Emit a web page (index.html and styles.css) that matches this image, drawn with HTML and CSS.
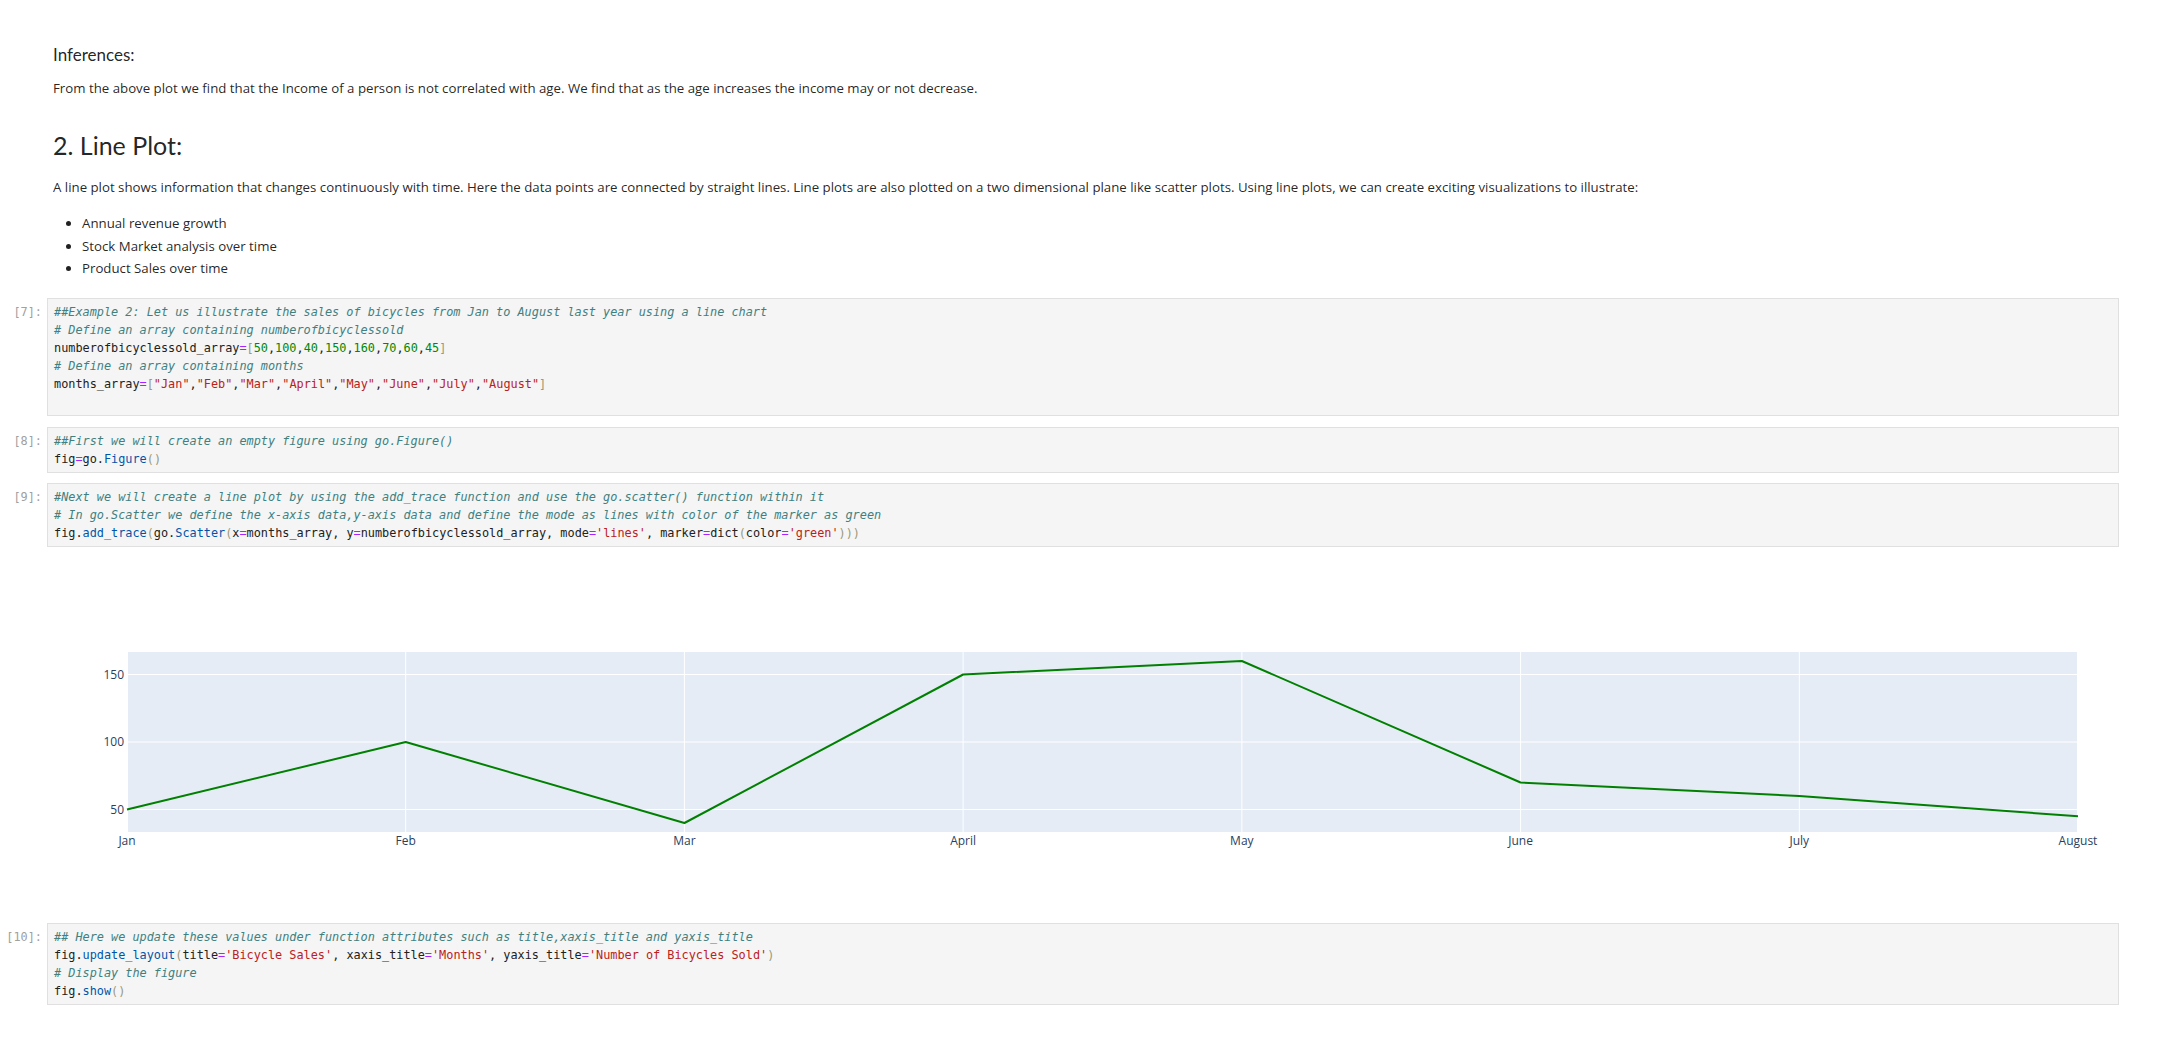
FILE: index.html
```html
<!DOCTYPE html>
<html>
<head>
<meta charset="utf-8">
<link rel="stylesheet" href="styles.css">
</head>
<body>
<div class="page">
  <div class="md">
    <h4 class="h-inf">Inferences:</h4>
    <p class="p1">From the above plot we find that the Income of a person is not correlated with age. We find that as the age increases the income may or not decrease.</p>
    <h2 class="h-line">2. Line Plot:</h2>
    <p class="p2">A line plot shows information that changes continuously with time. Here the data points are connected by straight lines. Line plots are also plotted on a two dimensional plane like scatter plots. Using line plots, we can create exciting visualizations to illustrate:</p>
    <ul class="list">
      <li>Annual revenue growth</li>
      <li>Stock Market analysis over time</li>
      <li>Product Sales over time</li>
    </ul>
  </div>

  <div class="cell c7">
    <div class="prompt">[7]:</div>
    <pre class="code"><span class="cm">##Example 2: Let us illustrate the sales of bicycles from Jan to August last year using a line chart</span>
<span class="cm"># Define an array containing numberofbicyclessold</span>
numberofbicyclessold_array<span class="op">=</span><span class="br">[</span><span class="nu">50</span>,<span class="nu">100</span>,<span class="nu">40</span>,<span class="nu">150</span>,<span class="nu">160</span>,<span class="nu">70</span>,<span class="nu">60</span>,<span class="nu">45</span><span class="br">]</span>
<span class="cm"># Define an array containing months</span>
months_array<span class="op">=</span><span class="br">[</span><span class="st">"Jan"</span>,<span class="st">"Feb"</span>,<span class="st">"Mar"</span>,<span class="st">"April"</span>,<span class="st">"May"</span>,<span class="st">"June"</span>,<span class="st">"July"</span>,<span class="st">"August"</span><span class="br">]</span>
&nbsp;</pre>
  </div>

  <div class="cell c8">
    <div class="prompt">[8]:</div>
    <pre class="code"><span class="cm">##First we will create an empty figure using go.Figure()</span>
fig<span class="op">=</span>go.<span class="pr">Figure</span><span class="br">()</span></pre>
  </div>

  <div class="cell c9">
    <div class="prompt">[9]:</div>
    <pre class="code"><span class="cm">#Next we will create a line plot by using the add_trace function and use the go.scatter() function within it</span>
<span class="cm"># In go.Scatter we define the x-axis data,y-axis data and define the mode as lines with color of the marker as green</span>
fig.<span class="pr">add_trace</span><span class="br">(</span>go.<span class="pr">Scatter</span><span class="br">(</span>x<span class="op">=</span>months_array, y<span class="op">=</span>numberofbicyclessold_array, mode<span class="op">=</span><span class="st">'lines'</span>, marker<span class="op">=</span>dict<span class="br">(</span>color<span class="op">=</span><span class="st">'green'</span><span class="br">)))</span></pre>
  </div>

  <div class="output">
    <svg class="chart" width="2072" height="352" viewBox="0 0 2072 352" xmlns="http://www.w3.org/2000/svg">
      <rect x="80" y="94" width="1951" height="180" fill="#E5ECF6"/>
      <g stroke="#ffffff" stroke-width="1">
        <line x1="80.5" y1="94" x2="80.5" y2="274"/>
        <line x1="358.7" y1="94" x2="358.7" y2="274"/>
        <line x1="637.4" y1="94" x2="637.4" y2="274"/>
        <line x1="916.1" y1="94" x2="916.1" y2="274"/>
        <line x1="1194.9" y1="94" x2="1194.9" y2="274"/>
        <line x1="1473.6" y1="94" x2="1473.6" y2="274"/>
        <line x1="1752.3" y1="94" x2="1752.3" y2="274"/>
        <line x1="2030.5" y1="94" x2="2030.5" y2="274"/>
        <line x1="80" y1="116.5" x2="2031" y2="116.5"/>
        <line x1="80" y1="184" x2="2031" y2="184"/>
        <line x1="80" y1="251.5" x2="2031" y2="251.5"/>
      </g>
      <polyline fill="none" stroke="#008000" stroke-width="2" stroke-linejoin="round"
        points="80,251.5 358.71,184 637.43,265 916.14,116.5 1194.86,103 1473.57,224.5 1752.29,238 2031,258.25"/>
      <g class="ytick" text-anchor="end">
        <text x="77" y="120.8">150</text>
        <text x="77" y="188.3">100</text>
        <text x="77" y="255.8">50</text>
      </g>
      <g class="xtick" text-anchor="middle">
        <text x="80" y="287">Jan</text>
        <text x="358.71" y="287">Feb</text>
        <text x="637.43" y="287">Mar</text>
        <text x="916.14" y="287">April</text>
        <text x="1194.86" y="287">May</text>
        <text x="1473.57" y="287">June</text>
        <text x="1752.29" y="287">July</text>
        <text x="2031" y="287">August</text>
      </g>
    </svg>
  </div>

  <div class="cell c10">
    <div class="prompt">[10]:</div>
    <pre class="code"><span class="cm">## Here we update these values under function attributes such as title,xaxis_title and yaxis_title</span>
fig.<span class="pr">update_layout</span><span class="br">(</span>title<span class="op">=</span><span class="st">'Bicycle Sales'</span>, xaxis_title<span class="op">=</span><span class="st">'Months'</span>, yaxis_title<span class="op">=</span><span class="st">'Number of Bicycles Sold'</span><span class="br">)</span>
<span class="cm"># Display the figure</span>
fig.<span class="pr">show</span><span class="br">()</span></pre>
  </div>
</div>
</body>
</html>
```

FILE: styles.css
```css
html, body {
  margin: 0;
  padding: 0;
  background: #ffffff;
}

.page {
  font-family: Lato, "Noto Sans", sans-serif;
  color: rgba(0, 0, 0, 0.87);
  padding-top: 45px;
  padding-bottom: 40px;
}

.md {
  padding-left: 53px;
  padding-right: 40px;
}

.h-inf {
  margin: 0;
  font-size: 17px;
  line-height: 20px;
  font-weight: 400;
}

.p1,
.p2,
.list {
  font-family: "Open Sans", "Noto Sans", sans-serif;
  font-size: 13.25px;
  line-height: 18px;
}

.p1 {
  margin: 14px 0 0 0;
}

.h-line {
  margin: 33px 0 0 0;
  font-size: 25px;
  line-height: 30px;
  font-weight: 400;
}

.p2 {
  margin: 18px 0 0 0;
}

.list {
  margin: 18px 0 0 0;
  padding-left: 29px;
}

.list li + li {
  margin-top: 4.7px;
}

.cell {
  display: flex;
  align-items: flex-start;
  margin-top: 11px;
  margin-right: 40px;
}

.c7 {
  margin-top: 21px;
}

.c9 {
  margin-top: 10px;
}

.c10 {
  margin-top: 13px;
}

.prompt {
  flex: 0 0 47px;
  box-sizing: border-box;
  padding-right: 5px;
  padding-top: 5px;
  text-align: right;
  font-family: "DejaVu Sans Mono", "Liberation Mono", monospace;
  font-size: 11.85px;
  line-height: 18px;
  color: #a0a0a0;
}

.code {
  flex: 1 1 auto;
  margin: 0;
  padding: 4px 6px;
  background: #f5f5f5;
  border: 1px solid #e0e0e0;
  font-family: "DejaVu Sans Mono", "Liberation Mono", monospace;
  font-size: 11.85px;
  line-height: 18px;
  color: #212121;
  white-space: pre;
  overflow: hidden;
}

.cm { color: #408080; font-style: italic; }
.op { color: #aa22ff; }
.nu { color: #008800; }
.st { color: #ba2121; }
.br { color: #999977; }
.pr { color: #0055aa; }

.output {
  margin-top: 11px;
  margin-left: 47px;
  height: 352px;
}

.chart {
  display: block;
}

.chart text {
  font-family: "Open Sans", verdana, arial, sans-serif;
  font-size: 12px;
  fill: #2a3f5f;
}
```
